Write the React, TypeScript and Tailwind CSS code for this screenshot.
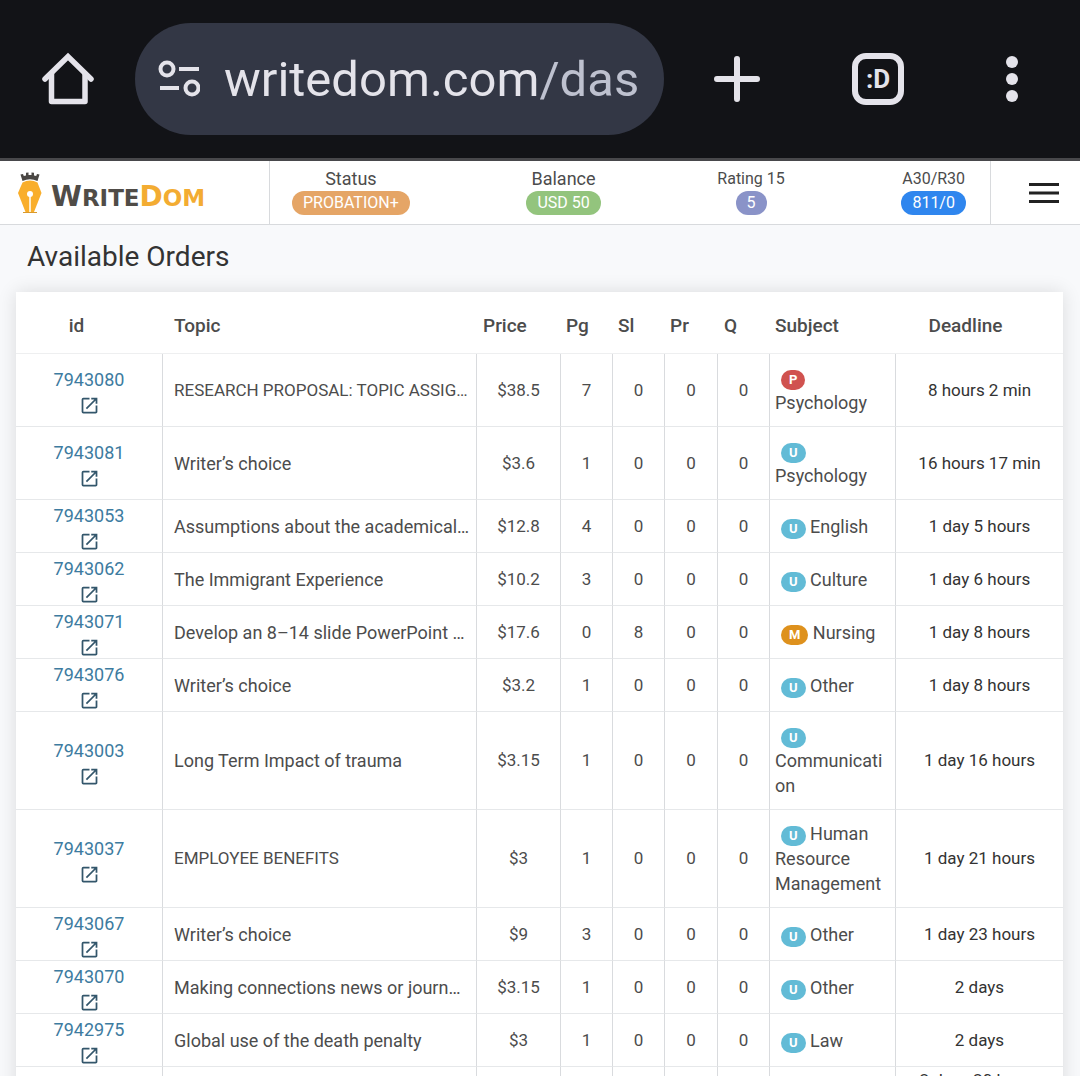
import { MdOpenInNew } from "react-icons/md";

type Level = "P" | "U" | "M";

interface Order {
  id: string;
  topic: string;
  price: string;
  pages: number;
  slides: number;
  level: Level;
  subject: string;
  deadline: string;
}

// topics arrive already shortened
const ORDERS: Order[] = [
  { id: "7943080", topic: "RESEARCH PROPOSAL: TOPIC ASSIG…", price: "$38.5", pages: 7, slides: 0, level: "P", subject: "Psychology", deadline: "8 hours 2 min" },
  { id: "7943081", topic: "Writer’s choice", price: "$3.6", pages: 1, slides: 0, level: "U", subject: "Psychology", deadline: "16 hours 17 min" },
  { id: "7943053", topic: "Assumptions about the academical…", price: "$12.8", pages: 4, slides: 0, level: "U", subject: "English", deadline: "1 day 5 hours" },
  { id: "7943062", topic: "The Immigrant Experience", price: "$10.2", pages: 3, slides: 0, level: "U", subject: "Culture", deadline: "1 day 6 hours" },
  { id: "7943071", topic: "Develop an 8–14 slide PowerPoint …", price: "$17.6", pages: 0, slides: 8, level: "M", subject: "Nursing", deadline: "1 day 8 hours" },
  { id: "7943076", topic: "Writer’s choice", price: "$3.2", pages: 1, slides: 0, level: "U", subject: "Other", deadline: "1 day 8 hours" },
  { id: "7943003", topic: "Long Term Impact of trauma", price: "$3.15", pages: 1, slides: 0, level: "U", subject: "Communication", deadline: "1 day 16 hours" },
  { id: "7943037", topic: "EMPLOYEE BENEFITS", price: "$3", pages: 1, slides: 0, level: "U", subject: "Human Resource Management", deadline: "1 day 21 hours" },
  { id: "7943067", topic: "Writer’s choice", price: "$9", pages: 3, slides: 0, level: "U", subject: "Other", deadline: "1 day 23 hours" },
  { id: "7943070", topic: "Making connections news or journ…", price: "$3.15", pages: 1, slides: 0, level: "U", subject: "Other", deadline: "2 days" },
  { id: "7942975", topic: "Global use of the death penalty", price: "$3", pages: 1, slides: 0, level: "U", subject: "Law", deadline: "2 days" },
  { id: "7942976", topic: "Writer’s choice", price: "$3", pages: 1, slides: 0, level: "U", subject: "Other", deadline: "2 days 20 hours 25 min" },
];

const LEVEL_COLORS: Record<Level, string> = {
  P: "bg-[#d0524f]",
  U: "bg-[#62bbd6]",
  M: "bg-[#de911d]",
};

const STATS = [
  { label: "Status", value: "PROBATION+", color: "bg-[#e5a566]", size: "text-lg" },
  { label: "Balance", value: "USD 50", color: "bg-[#93c47d]", size: "text-lg" },
  { label: "Rating 15", value: "5", color: "bg-[#8a93c8]", size: "text-base" },
  { label: "A30/R30", value: "811/0", color: "bg-[#2f86ee]", size: "text-base" },
];

const BORDERS = "border-b border-r border-b-[#e6e8ea] border-r-[#d9dbde]";
const CELL = `${BORDERS} pb-[11px] pt-[11px] text-center`;

function BrowserBar() {
  return (
    <div className="flex h-[161px] shrink-0 items-center border-b-[3px] border-[#48484b] bg-[#121317] text-[#e4e3ea]">
      <button type="button" aria-label="Home" className="flex w-[135px] justify-center">
        <svg viewBox="0 0 54 54" className="h-[54px] w-[54px]" fill="none" stroke="currentColor" strokeWidth="5.5">
          <path d="M4 27 27 4.500l23 22.500" strokeLinejoin="miter" strokeLinecap="round" />
          <path d="M10.500 21v28.500h33.500V21" strokeLinejoin="round" />
        </svg>
      </button>
      <div className="flex h-28 min-w-0 flex-1 items-center gap-6 rounded-full bg-[#333745] pl-[23px] pr-4">
        <button type="button" aria-label="Site information" className="shrink-0">
          <svg viewBox="0 0 42 38" className="h-[38px] w-[42px]" fill="none" stroke="currentColor" strokeWidth="4">
            <circle cx="9" cy="9" r="6.500" />
            <path d="M21 9h20M2 28h19" />
            <circle cx="34" cy="28" r="6.500" />
          </svg>
        </button>
        <div className="whitespace-nowrap pt-[2px] text-[49px] leading-[64px]">
          writedom.com<span className="text-[#bec1cf]">/das</span>
        </div>
      </div>
      <div className="flex w-[416px] shrink-0 items-center">
        <button type="button" aria-label="New tab" className="flex w-[146px] justify-center">
          <svg viewBox="0 0 46 46" className="h-[46px] w-[46px]" stroke="currentColor" strokeWidth="6" strokeLinecap="round">
            <path d="M23 3v40M3 23h40" />
          </svg>
        </button>
        <button type="button" aria-label="Open tabs" className="flex w-[136px] justify-center">
          <span className="flex h-[52px] w-[52px] items-center justify-center rounded-[14px] border-[6px] border-current text-[26px] font-bold leading-none">
            :D
          </span>
        </button>
        <button type="button" aria-label="More options" className="flex flex-1 justify-center pr-[2px]">
          <svg viewBox="0 0 12 46" className="h-[46px] w-3" fill="currentColor">
            <circle cx="6" cy="6" r="6" />
            <circle cx="6" cy="23" r="6" />
            <circle cx="6" cy="40" r="6" />
          </svg>
        </button>
      </div>
    </div>
  );
}

function Logo() {
  return (
    <a href="#" aria-label="WriteDom" className="flex items-center gap-2 font-['DejaVu_Sans',sans-serif] font-bold leading-none">
      <svg viewBox="0 0 26 42" className="h-[42px] w-[26px]">
        <path d="M5.500 9 3.500 2.500l2.500-.500.800 2 2.200-.500V.800L11.500.500v2.500h3V.500l2.500.300v2.700l2.200.500.800-2 2.500.500L20.500 9Q13 5.500 5.500 9Z" fill="#4a4744" />
        <path d="M5.500 10.500Q13 6.500 20.500 10.500L24.500 21 17 40H8.500L1 21Z" fill="#f9ae2b" />
        <path d="M13 22v18" stroke="#fff" strokeWidth="1.500" />
        <circle cx="13" cy="22" r="3" fill="#fff" />
        <path d="M6 40.500h14" stroke="#d99a2c" strokeWidth="1" />
      </svg>
      <span className="pt-2 text-[23px] text-[#504c47]">
        <span className="text-[28px]">W</span>RITE
        <span className="text-[#f3ac32]">
          <span className="text-[28px]">D</span>OM
        </span>
      </span>
    </a>
  );
}

function Header() {
  return (
    <header className="flex h-16 shrink-0 border-b border-[#d8dadd] bg-white">
      <div className="flex w-[270px] shrink-0 items-center border-r border-[#d8dadd] pl-[17px]">
        <Logo />
      </div>
      <div className="flex flex-1 items-center justify-between pb-[3px] pl-[22px] pr-6">
        {STATS.map((stat) => (
          <div key={stat.label} className="flex flex-col items-center">
            <span className={`${stat.size} leading-6`}>{stat.label}</span>
            <span className={`rounded-full px-[11px] text-base leading-6 text-white ${stat.color}`}>{stat.value}</span>
          </div>
        ))}
      </div>
      <div className="flex w-[90px] shrink-0 items-center justify-center border-l border-[#d8dadd] pl-4">
        <button type="button" aria-label="Menu">
          <svg viewBox="0 0 30 20" className="h-5 w-[30px]" stroke="#222" strokeWidth="3">
            <path d="M0 1.500h30M0 10h30M0 18.500h30" />
          </svg>
        </button>
      </div>
    </header>
  );
}

function OrderRow({ order }: { order: Order }) {
  // all-caps topics run wide, so they go one step smaller
  const isUpper = order.topic === order.topic.toUpperCase();

  return (
    <tr>
      <td className={`${BORDERS} pt-px text-center`}>
        <a href={`#${order.id}`} className="flex flex-col items-center gap-[3px] text-lg text-[#3d7ba0]">
          <span className="pt-[2px] leading-[25px]">{order.id}</span>
          <MdOpenInNew className="h-[21px] w-[21px] text-[#33566b]" />
        </a>
      </td>
      <td className={`${BORDERS} whitespace-nowrap py-[11px] pl-[11px] leading-[25px] ${isUpper ? "text-[17px]" : "text-[18px]"}`}>
        {order.topic}
      </td>
      <td className={CELL}>{order.price}</td>
      <td className={CELL}>{order.pages}</td>
      <td className={CELL}>{order.slides}</td>
      <td className={CELL}>0</td>
      <td className={CELL}>0</td>
      <td className={`${BORDERS} break-words py-[11px] pl-[5px] pr-[6px] text-[18px] leading-[25px]`}>
        <span className={`ml-[6px] inline-block rounded-full px-2 text-[13px] font-bold leading-5 text-white ${LEVEL_COLORS[order.level]}`}>
          {order.level}
        </span>{" "}
        {order.subject}
      </td>
      <td className="border-b border-[#e6e8ea] px-5 text-center text-[#333]">{order.deadline}</td>
    </tr>
  );
}

export default function App() {
  return (
    <div className="flex h-screen flex-col overflow-hidden bg-[#f8f9fb] font-['Roboto',sans-serif] text-[17px] leading-[25px] text-[#4c4c4c]">
      <BrowserBar />
      <Header />
      <main className="min-h-0 flex-1 overflow-hidden pl-4 pr-[17px]">
        <h1 className="pb-[19px] pl-[11px] pt-4 text-[28px] leading-8 text-[#333]">Available Orders</h1>
        <table className="w-full table-fixed border-separate border-spacing-0 bg-white shadow-[0_0_18px_rgba(0,0,0,0.12)]">
          <colgroup>
            <col className="w-[147px]" />
            <col />
            <col className="w-[84px]" />
            <col className="w-[52px]" />
            <col className="w-[52px]" />
            <col className="w-[53px]" />
            <col className="w-[52px]" />
            <col className="w-[126px]" />
            <col className="w-[167px]" />
          </colgroup>
          <thead>
            <tr className="h-[62px] text-left text-[19px] [&>th]:border-b [&>th]:border-[#eeeff0] [&>th]:pt-[6px] [&>th]:font-medium">
              <th className="pr-[26px] text-center">id</th>
              <th className="pl-[11px]">Topic</th>
              <th className="pl-[6px]">Price</th>
              <th className="pl-[5px]">Pg</th>
              <th className="pl-[5px]">Sl</th>
              <th className="pl-[5px]">Pr</th>
              <th className="pl-[6px]">Q</th>
              <th className="pl-[5px]">Subject</th>
              <th className="pr-7 text-center">Deadline</th>
            </tr>
          </thead>
          <tbody>
            {ORDERS.map((order) => (
              <OrderRow key={order.id} order={order} />
            ))}
          </tbody>
        </table>
      </main>
    </div>
  );
}
